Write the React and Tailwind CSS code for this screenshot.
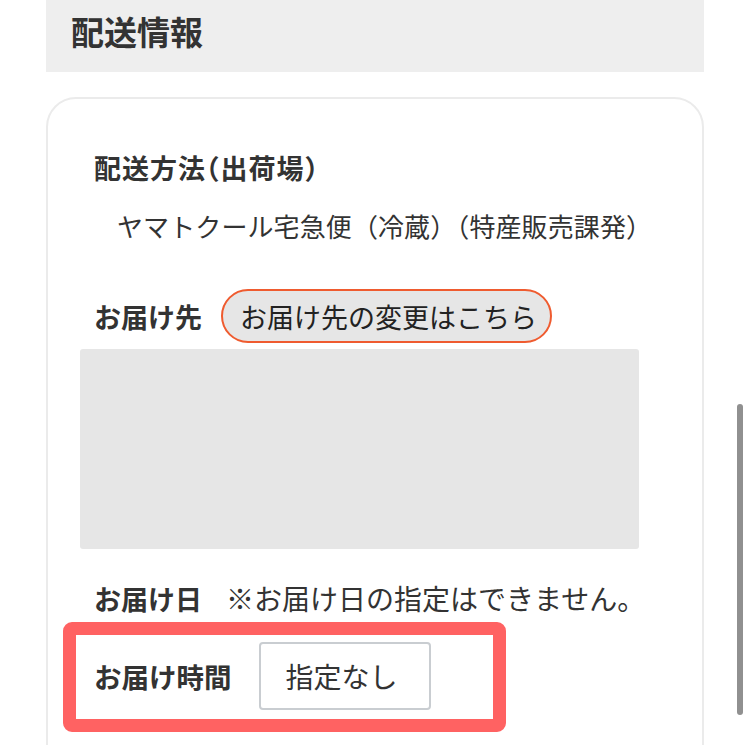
import React from "react";

const font = { fontFamily: '"Noto Sans CJK JP", "Noto Sans", sans-serif' };

export default function App() {
  return (
    <div className="relative w-[750px] h-[745px] overflow-hidden bg-white text-[#333]" style={font}>
      <div className="mx-[46px]">
        {/* Section header */}
        <div className="h-[72px] bg-[#eeeeee] pl-[25px] pt-[15px]">
          <h2 className="text-[33px] font-bold leading-none">配送情報</h2>
        </div>

        {/* Card */}
        <div className="mt-[25px] border-2 border-[#ebebeb] rounded-[30px] h-[700px] pt-[55px]">
          {/* Shipping method */}
          <div className="pl-[46px] text-[27px] font-bold leading-none tracking-[1px] [font-feature-settings:'halt']">
            配送方法（出荷場）
          </div>
          <div className="pl-[69px] mt-[32px] text-[26px] leading-none tracking-[0.1px]">
            ヤマトクール宅急便（冷蔵）（特産販売課発）
          </div>

          {/* Destination */}
          <div className="mt-[50px] flex items-center pl-[46px]">
            <span className="text-[27px] font-bold leading-none">お届け先</span>
            <button className="ml-[19px] h-[54px] w-[331px] pl-[17px] text-left rounded-full bg-[#e6e6e6] border-2 border-[#ef5b2f] text-[27px] leading-none text-[#222]">
              お届け先の変更はこちら
            </button>
          </div>
          <div className="ml-[32px] mt-[6px] w-[559px] h-[200px] bg-[#e6e6e6] rounded-[3px]" />

          {/* Delivery date */}
          <div className="mt-[35px] h-[28px] flex items-center pl-[46px]">
            <span className="text-[27px] font-bold leading-none">お届け日</span>
            <span className="ml-[24px] text-[28px] leading-none">※お届け日の指定はできません。</span>
          </div>

          {/* Delivery time (highlighted) */}
          <div className="ml-[15px] mt-[10px] w-[443px] h-[110px] border-[13px] border-[#ff6262] rounded-[9px] flex items-center pl-[18px]">
            <span className="text-[27.5px] font-bold leading-none">お届け時間</span>
            <div className="ml-[27px] mb-[3px] w-[172px] h-[68px] border-2 border-[#c9cdd1] rounded-[4px] flex items-center pl-[25px] text-[28px] leading-none">
              指定なし
            </div>
          </div>
        </div>
      </div>

      {/* Overlay scrollbar */}
      <div className="absolute right-[7px] top-[404px] w-[6px] h-[311px] rounded-full bg-[#909090]" />
    </div>
  );
}
